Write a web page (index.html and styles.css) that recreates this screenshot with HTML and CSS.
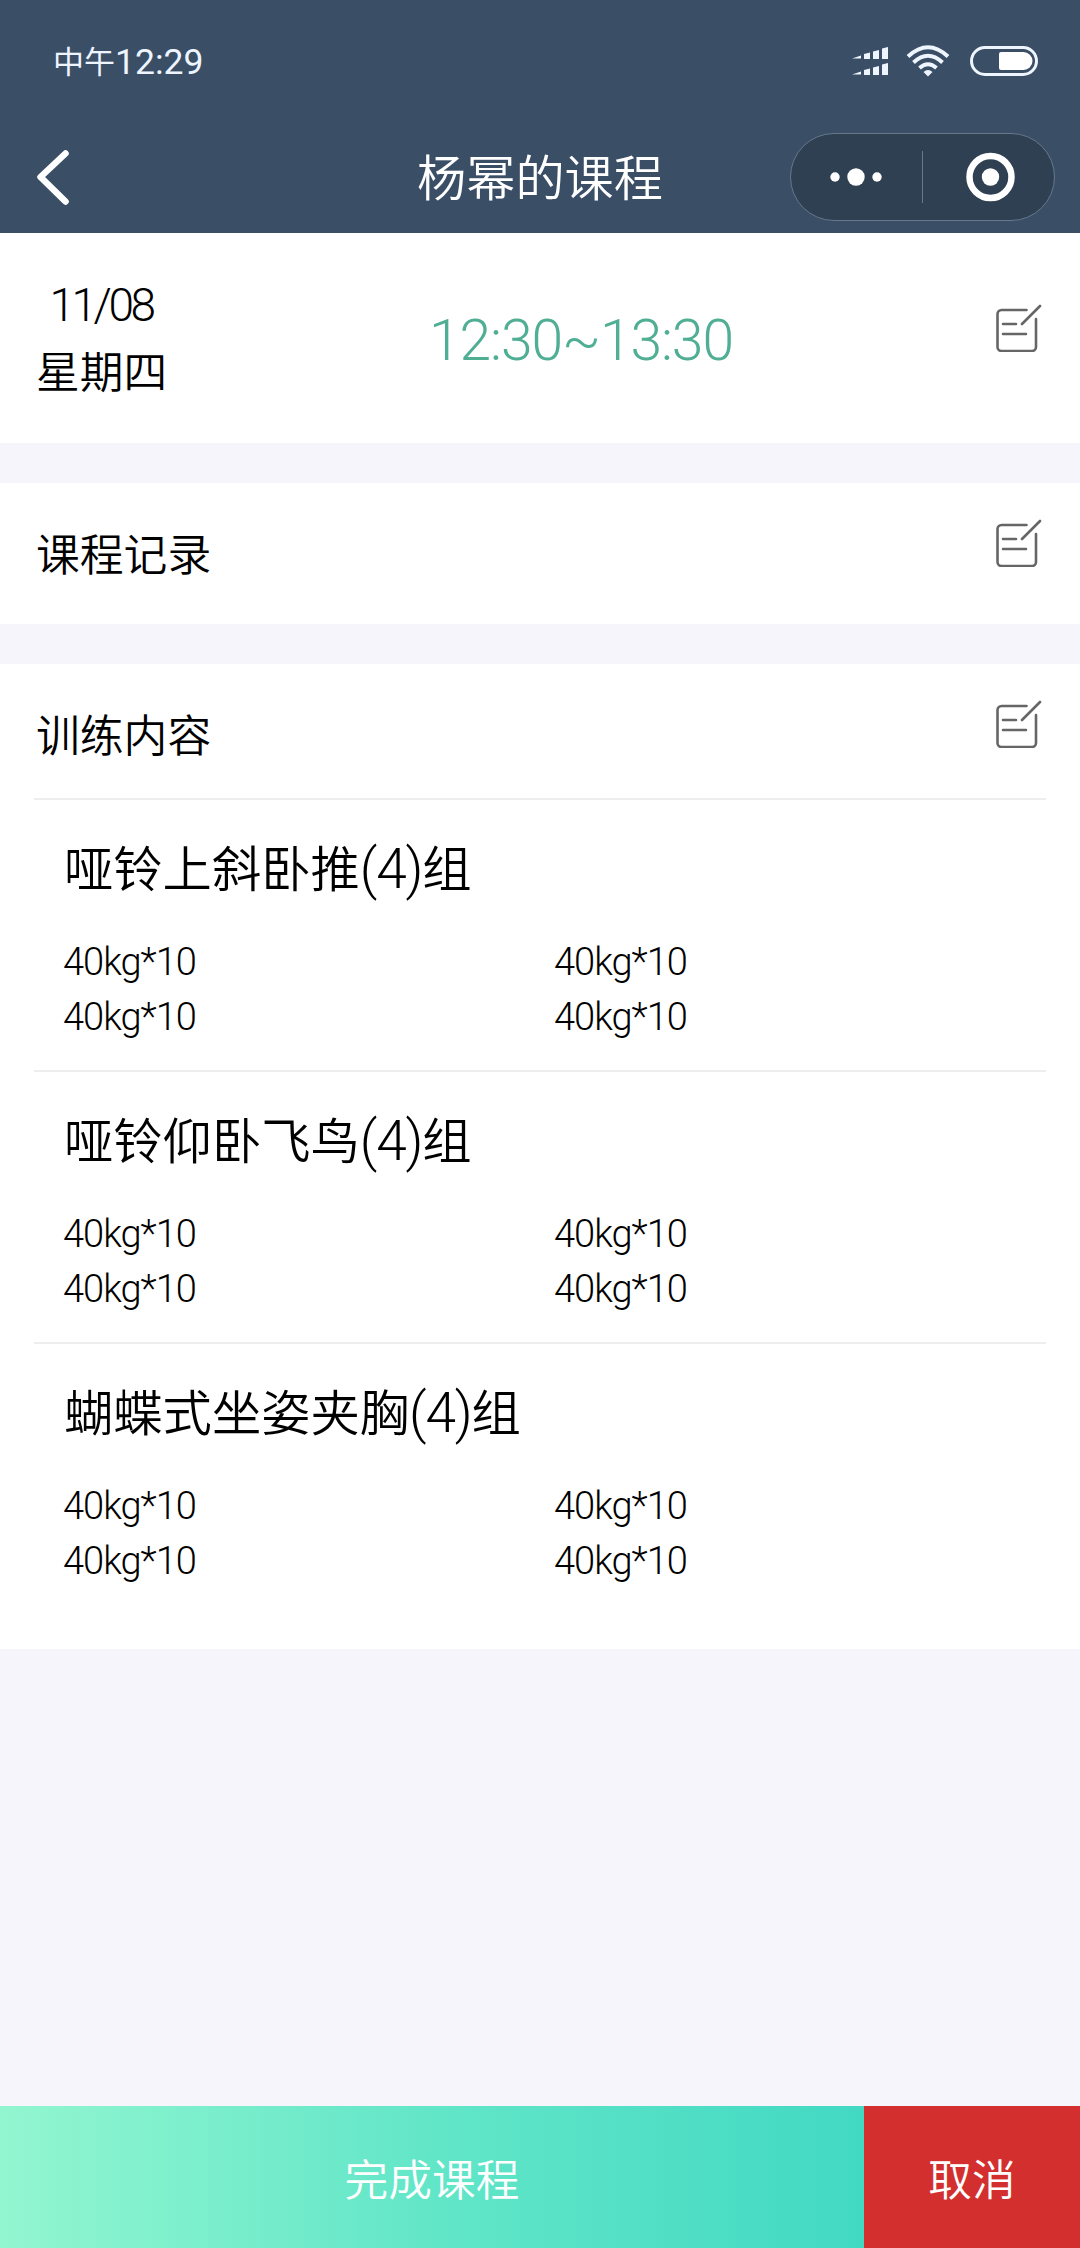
FILE: index.html
```html
<!DOCTYPE html>
<html lang="zh-CN">
<head>
    <meta charset="UTF-8">
    <meta name="viewport" content="width=device-width, initial-scale=1.0">
    <title>杨幂的课程</title>
    <link rel="stylesheet" href="styles.css">
</head>
<body>
    <svg class="hidden" width="0" height="0">
        <symbol id="edit" viewBox="0 0 46 48">
            <path d="M30.5 6H5.5a4 4 0 0 0-4 4v33a4 4 0 0 0 4 4H36a4 4 0 0 0 4-4V15"/>
            <path d="M44 2 26 20M7 20h13M7 30h23"/>
        </symbol>
    </svg>

    <header>
        <div class="status-bar">
            <p class="clock">中午<span>12:29</span></p>
            <svg class="signal" width="36" height="29" viewBox="0 0 36 29" fill="#eef5ff">
                <path d="M0 11.5 9 8.5V11.5H0zM12 7l6-1.5V12h-6zM21 4.5l6-1.5V12h-6zM30 1.5 36 0V12h-6z"/>
                <path d="M0 27.5 9 24.5V27.5H0zM12 23l6-1.5V28h-6zM21 20.5l6-1.5V28h-6zM30 17.5 36 16V28h-6z"/>
            </svg>
            <svg class="wifi" width="44" height="32" viewBox="0 0 44 32" fill="none" stroke="#eef5ff" stroke-width="4">
                <path d="M2 11.5Q22-7 42 11.5M7.5 17.5Q22 4 36.5 17.5M13.5 23Q22 15.5 30.5 23"/>
                <path d="M17.5 27Q22 23 26.5 27L22 31.5z" fill="#eef5ff" stroke="none"/>
            </svg>
            <svg class="battery" width="68" height="30" viewBox="0 0 68 30">
                <rect x="1.5" y="1.5" width="65" height="27" rx="13.5" fill="none" stroke="#eef5ff" stroke-width="3"/>
                <path d="M31 6h22.5a9 9 0 0 1 0 18H31a2 2 0 0 1-2-2V8a2 2 0 0 1 2-2z" fill="#fff"/>
            </svg>
        </div>
        <div class="nav-bar">
            <svg class="back" width="34" height="56" viewBox="0 0 34 56">
                <path d="M30.5 4.5 5.5 28l25 24.5"/>
            </svg>
            <h1>杨幂的课程</h1>
            <div class="capsule">
                <svg width="131" height="86" viewBox="0 0 131 86" fill="#fff">
                    <circle cx="44" cy="43" r="4.7"/>
                    <circle cx="65" cy="43" r="8.7"/>
                    <circle cx="86" cy="43" r="4.7"/>
                </svg>
                <span class="divider"></span>
                <svg width="131" height="86" viewBox="0 0 131 86">
                    <circle cx="67.5" cy="43" r="21" fill="none" stroke="#fff" stroke-width="6.5"/>
                    <circle cx="67.5" cy="43" r="8.7" fill="#fff"/>
                </svg>
            </div>
        </div>
    </header>

    <main>
        <section class="card schedule">
            <div class="date">
                <p class="day">11/08</p>
                <p>星期四</p>
            </div>
            <p class="time">12:30~13:30</p>
            <svg class="edit"><use href="#edit"/></svg>
        </section>

        <section class="card record">
            <h2>课程记录</h2>
            <svg class="edit"><use href="#edit"/></svg>
        </section>

        <section class="card training">
            <div class="training-head">
                <h2>训练内容</h2>
                <svg class="edit"><use href="#edit"/></svg>
            </div>
            <div class="exercise">
                <h3>哑铃上斜卧推<span>(4)</span>组</h3>
                <div class="sets">
                    <span>40kg*10</span>
                    <span>40kg*10</span>
                    <span>40kg*10</span>
                    <span>40kg*10</span>
                </div>
            </div>
            <div class="exercise">
                <h3>哑铃仰卧飞鸟<span>(4)</span>组</h3>
                <div class="sets">
                    <span>40kg*10</span>
                    <span>40kg*10</span>
                    <span>40kg*10</span>
                    <span>40kg*10</span>
                </div>
            </div>
            <div class="exercise">
                <h3>蝴蝶式坐姿夹胸<span>(4)</span>组</h3>
                <div class="sets">
                    <span>40kg*10</span>
                    <span>40kg*10</span>
                    <span>40kg*10</span>
                    <span>40kg*10</span>
                </div>
            </div>
        </section>
    </main>

    <footer>
        <button class="finish">完成课程</button>
        <button class="cancel">取消</button>
    </footer>
</body>
</html>
```

FILE: styles.css
```css
* {
    box-sizing: border-box;
    margin: 0;
    padding: 0;
}

body {
    display: flex;
    flex-direction: column;
    height: 2248px;
    background-color: #f5f5fb;
    color: #000;
    font-family: Roboto, "Noto Sans CJK SC", sans-serif;
    font-weight: 350;
}

h1, h2, h3 {
    font-weight: 350;
}

svg {
    display: block;
    flex: none;
}

.hidden {
    display: none;
}

/* top bar */
header {
    height: 233px;
    background-color: #3a4e66;
    color: #fff;
}

.status-bar {
    display: flex;
    align-items: center;
    height: 120px;
    padding: 2px 42px 0 53px;
}

.clock {
    flex: 1;
    padding-top: 3px;
    font-size: 31px;
    line-height: 40px;
    color: #eef5ff;
    font-weight: 400;
}

.clock span {
    font-size: 35.5px;
    line-height: 1;
    vertical-align: -1px;
}

.wifi {
    margin-left: 18px;
}

.battery {
    margin-left: 20px;
}

.nav-bar {
    display: grid;
    grid-template-columns: 290px 1fr 290px;
    align-items: center;
    height: 113px;
}

.back {
    margin-left: 35px;
    fill: none;
    stroke: #fff;
    stroke-width: 6.5;
    stroke-linecap: round;
    stroke-linejoin: round;
}

h1 {
    padding-top: 4px;
    font-size: 49.2px;
    line-height: 60px;
    text-align: center;
    white-space: nowrap;
}

.capsule {
    display: flex;
    align-items: center;
    justify-self: end;
    width: 265px;
    height: 88px;
    margin-right: 25px;
    border: 1px solid #65788c;
    border-radius: 44px;
    background-color: #2f4053;
}

.divider {
    width: 1px;
    height: 52px;
    background-color: #65788c;
}

/* cards */
.card {
    background-color: #fff;
}

.edit {
    width: 46px;
    height: 48px;
    fill: none;
    stroke: #666;
    stroke-width: 2.6;
    stroke-linecap: round;
}

.schedule {
    display: grid;
    grid-template-columns: 130px 1fr 46px;
    height: 210px;
    padding: 39px 38px 0 36px;
}

.date {
    font-size: 43.7px;
    line-height: 68px;
    text-align: center;
    white-space: nowrap;
}

.day {
    font-size: 46px;
    line-height: 67px;
    letter-spacing: -3.5px;
}

.time {
    font-size: 57px;
    line-height: 138px;
    letter-spacing: -1.1px;
    color: #4fae93;
    text-align: center;
}

.schedule .edit {
    margin-top: 32px;
}

.record, .training-head {
    display: flex;
    align-items: center;
    justify-content: space-between;
}

.record {
    height: 141px;
    margin: 40px 0;
    padding: 0 38px 0 36px;
}

h2 {
    padding-top: 4px;
    font-size: 43.8px;
    line-height: 60px;
}

.record .edit, .training-head .edit {
    margin-bottom: 21px;
}

.training {
    height: 985px;
    padding: 0 34px;
}

.training-head {
    height: 134px;
    padding: 7px 4px 0 2px;
}

.exercise {
    height: 272px;
    padding: 40px 0 0 29px;
    border-top: 2px solid #eee;
}

h3 {
    height: 60px;
    margin-bottom: 35px;
    padding-left: 1px;
    font-size: 49.3px;
    line-height: 60px;
}

h3 span {
    font-size: 55px;
    line-height: 1;
    letter-spacing: -1.2px;
    vertical-align: -1px;
}

.sets {
    display: grid;
    grid-template-columns: 491px 1fr;
    font-size: 38px;
    line-height: 55px;
    letter-spacing: -1px;
}

/* bottom buttons */
footer {
    display: flex;
    height: 142px;
    margin-top: auto;
}

button {
    border: none;
    color: #fff;
    font: inherit;
    font-size: 43.7px;
    cursor: pointer;
}

.finish {
    width: 80%;
    background: linear-gradient(to right, #92f6d0, #62e6c8 50%, #42d9c3);
}

.cancel {
    width: 20%;
    background-color: #d32f2e;
}
```
